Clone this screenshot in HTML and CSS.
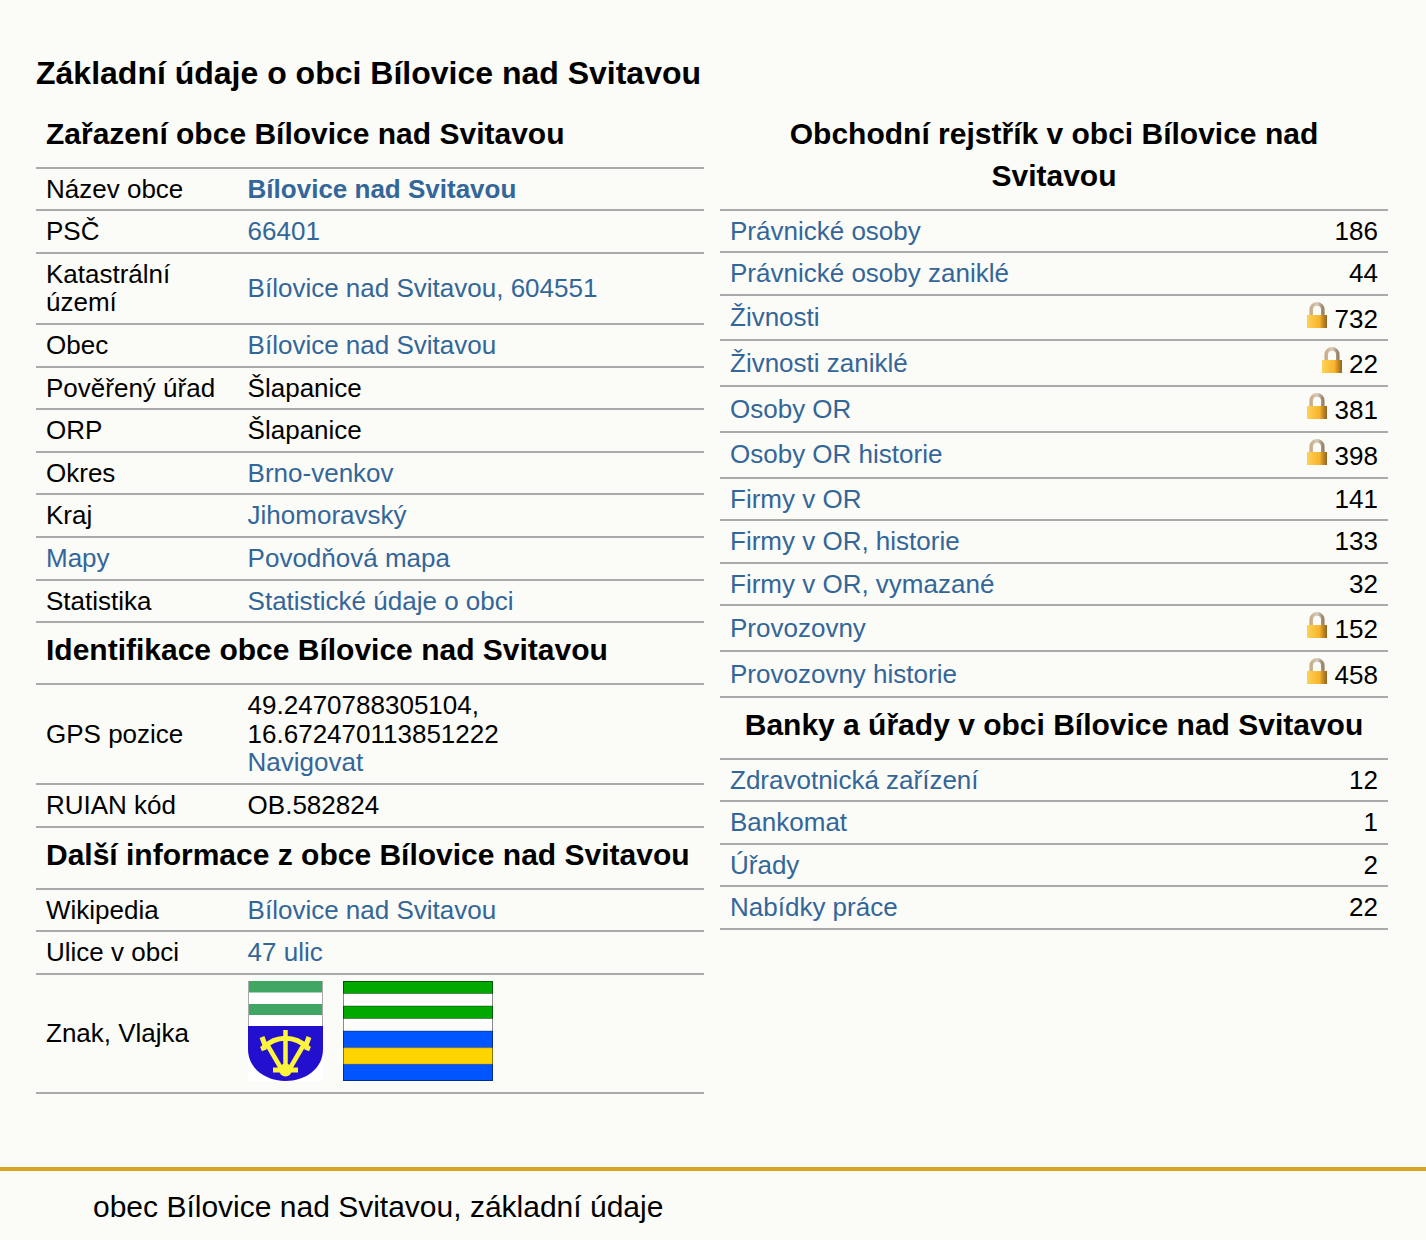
FILE: index.html
```html
<!DOCTYPE html>
<html lang="cs">
<head>
<meta charset="utf-8">
<title>Bílovice nad Svitavou</title>
<link rel="stylesheet" href="styles.css">
</head>
<body>
<svg class="defs" width="0" height="0" aria-hidden="true">
  <defs>
    <linearGradient id="lockbody" x1="0" x2="1" y1="0" y2="0">
      <stop offset="0" stop-color="#ffd257"/><stop offset=".62" stop-color="#f6b52c"/><stop offset=".8" stop-color="#c98a22"/><stop offset="1" stop-color="#8f6420"/>
    </linearGradient>
    <linearGradient id="lockhook" x1="0" x2="1" y1="0" y2="0">
      <stop offset="0" stop-color="#c9ad8a"/><stop offset=".5" stop-color="#d8cdbf"/><stop offset="1" stop-color="#9a8468"/>
    </linearGradient>
    <symbol id="lock" viewBox="0 0 20 26">
      <path d="M4.2 14V7.6a5.8 5.8 0 0 1 11.6 0V14" fill="none" stroke="url(#lockhook)" stroke-width="3.6"/>
      <rect x="0" y="13" width="20" height="13" fill="url(#lockbody)"/>
    </symbol>
  </defs>
</svg>
<main class="page">
  <h1 class="title">Základní údaje o obci Bílovice nad Svitavou</h1>
  <div class="columns">
    <table class="info">
      <tr><th colspan="2">Zařazení obce Bílovice nad Svitavou</th></tr>
      <tr><td class="label">Název obce</td><td><a href="#"><b>Bílovice nad Svitavou</b></a></td></tr>
      <tr><td class="label">PSČ</td><td><a href="#">66401</a></td></tr>
      <tr><td class="label">Katastrální území</td><td><a href="#">Bílovice nad Svitavou, 604551</a></td></tr>
      <tr><td class="label">Obec</td><td><a href="#">Bílovice nad Svitavou</a></td></tr>
      <tr><td class="label">Pověřený úřad</td><td>Šlapanice</td></tr>
      <tr><td class="label">ORP</td><td>Šlapanice</td></tr>
      <tr><td class="label">Okres</td><td><a href="#">Brno-venkov</a></td></tr>
      <tr><td class="label">Kraj</td><td><a href="#">Jihomoravský</a></td></tr>
      <tr><td class="label"><a href="#">Mapy</a></td><td><a href="#">Povodňová mapa</a></td></tr>
      <tr><td class="label">Statistika</td><td><a href="#">Statistické údaje o obci</a></td></tr>
      <tr><th colspan="2">Identifikace obce Bílovice nad Svitavou</th></tr>
      <tr><td class="label">GPS pozice</td><td>49.2470788305104, 16.672470113851222<br><a href="#">Navigovat</a></td></tr>
      <tr><td class="label">RUIAN kód</td><td>OB.582824</td></tr>
      <tr><th colspan="2">Další informace z obce Bílovice nad Svitavou</th></tr>
      <tr><td class="label">Wikipedia</td><td><a href="#">Bílovice nad Svitavou</a></td></tr>
      <tr><td class="label">Ulice v obci</td><td><a href="#">47 ulic</a></td></tr>
      <tr>
        <td class="label">Znak, Vlajka</td>
        <td class="symbols">
          <svg class="crest" viewBox="0 0 75 100" width="75" height="100" role="img" aria-label="Znak">
            <rect width="75" height="100" fill="#fff"/>
            <rect width="75" height="11.5" fill="#41a564"/>
            <rect y="23" width="75" height="11" fill="#41a564"/>
            <path d="M.5 0V45M74.5 0V45" stroke="#aaa" stroke-width="1" fill="none"/>
            <path d="M0 45H75V68C75 88 57 100 37.5 100S0 88 0 68Z" fill="#2310cf"/>
            <g stroke="#fdf53c" fill="none">
              <path d="M15 67C28 54 47 54 60 67" stroke-width="5"/>
              <path d="M37.5 49V92" stroke-width="4.5"/>
              <path d="M20 65L34 89M55 65L41 89" stroke-width="4.5"/>
              <path d="M14 56L17 64M61 56L58 64M13 68L18 66M62 68L57 66" stroke-width="5"/>
              <path d="M25 89H50" stroke-width="5"/>
            </g>
            <circle cx="37.5" cy="89" r="6.5" fill="#fdf53c"/>
          </svg>
          <svg class="flag" viewBox="0 0 150 100" width="150" height="100" role="img" aria-label="Vlajka">
            <rect width="150" height="100" fill="#fff"/>
            <rect y="0" width="150" height="12.5" fill="#00a800"/>
            <rect y="25" width="150" height="12.5" fill="#00a800"/>
            <rect y="50" width="150" height="16.7" fill="#0055ff"/>
            <rect y="66.7" width="150" height="16.6" fill="#ffd500"/>
            <rect y="83.3" width="150" height="16.7" fill="#0055ff"/>
            <rect x=".5" y=".5" width="149" height="99" fill="none" stroke="#000" stroke-opacity=".45"/>
            <path d="M0 12.5H150M0 25H150M0 37.5H150M0 50H150M0 66.7H150M0 83.3H150" stroke="#000" stroke-opacity=".35" stroke-width="1" fill="none"/>
          </svg>
        </td>
      </tr>
    </table>
    <table class="info stats">
      <tr><th colspan="2">Obchodní rejstřík v obci Bílovice nad Svitavou</th></tr>
      <tr><td><a href="#">Právnické osoby</a></td><td class="num">186</td></tr>
      <tr><td><a href="#">Právnické osoby zaniklé</a></td><td class="num">44</td></tr>
      <tr><td><a href="#">Živnosti</a></td><td class="num"><svg class="lock"><use href="#lock"/></svg> 732</td></tr>
      <tr><td><a href="#">Živnosti zaniklé</a></td><td class="num"><svg class="lock"><use href="#lock"/></svg> 22</td></tr>
      <tr><td><a href="#">Osoby OR</a></td><td class="num"><svg class="lock"><use href="#lock"/></svg> 381</td></tr>
      <tr><td><a href="#">Osoby OR historie</a></td><td class="num"><svg class="lock"><use href="#lock"/></svg> 398</td></tr>
      <tr><td><a href="#">Firmy v OR</a></td><td class="num">141</td></tr>
      <tr><td><a href="#">Firmy v OR, historie</a></td><td class="num">133</td></tr>
      <tr><td><a href="#">Firmy v OR, vymazané</a></td><td class="num">32</td></tr>
      <tr><td><a href="#">Provozovny</a></td><td class="num"><svg class="lock"><use href="#lock"/></svg> 152</td></tr>
      <tr><td><a href="#">Provozovny historie</a></td><td class="num"><svg class="lock"><use href="#lock"/></svg> 458</td></tr>
      <tr><th colspan="2">Banky a úřady v obci Bílovice nad Svitavou</th></tr>
      <tr><td><a href="#">Zdravotnická zařízení</a></td><td class="num">12</td></tr>
      <tr><td><a href="#">Bankomat</a></td><td class="num">1</td></tr>
      <tr><td><a href="#">Úřady</a></td><td class="num">2</td></tr>
      <tr><td><a href="#">Nabídky práce</a></td><td class="num">22</td></tr>
    </table>
  </div>
</main>
<footer class="footer">obec Bílovice nad Svitavou, základní údaje</footer>
</body>
</html>
```
FILE: styles.css
```css
html, body {
  margin: 0;
  background: #fbfbf7;
  color: #000;
  font-family: "Liberation Sans", Arial, sans-serif;
}
.defs { position: absolute; }
.page { padding: 53px 38px 0 36px; height: 1167px; box-sizing: border-box; }
.title {
  margin: 0 0 13.6px;
  font-size: 32px;
  line-height: 40px;
  font-weight: bold;
}
.columns {
  display: grid;
  grid-template-columns: 668px 668px;
  gap: 16px;
  align-items: start;
}
.info {
  border-collapse: collapse;
  width: 668px;
  font-size: 26px;
  line-height: 1.1;
}
.info th {
  font-size: 30px;
  line-height: 42px;
  font-weight: bold;
  padding: 6px 10px 12px;
  text-align: left;
}
.stats th { text-align: center; }
.info td {
  padding: 6px 10px;
  border-top: 2px solid #aaa;
  border-bottom: 2px solid #aaa;
}
.info th { border-bottom: 2px solid #aaa; }
.label { width: 181.6px; }
.info a { color: #336699; text-decoration: none; }
.num { text-align: right; white-space: nowrap; }
.lock { width: 20px; height: 26.1px; vertical-align: 0; }
.symbols { white-space: nowrap; }
.crest, .flag { vertical-align: baseline; }
.crest { margin-right: 13px; }
.footer {
  border-top: 4px solid #daa520;
  padding: 17px 0 0 93px;
  font-size: 30px;
  line-height: 38px;
  height: 73px;
  box-sizing: border-box;
  overflow: hidden;
}
```
